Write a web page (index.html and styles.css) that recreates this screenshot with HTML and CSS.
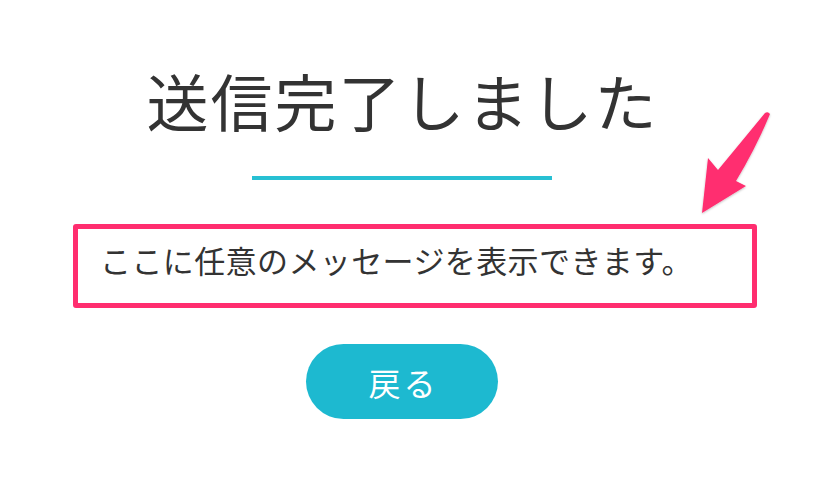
FILE: index.html
```html
<!DOCTYPE html>
<html lang="ja">
<head>
<meta charset="utf-8">
<title>送信完了しました</title>
<link rel="stylesheet" href="styles.css">
</head>
<body>
<main class="page">
  <h1 class="title">送信完了しました</h1>
  <div class="rule"></div>
  <div class="message">ここに任意のメッセージを表示できます。</div>
  <div class="actions">
    <a class="back-btn" href="#">戻る</a>
  </div>
  <svg class="arrow" width="90" height="120" viewBox="0 0 90 120" aria-hidden="true">
    <defs>
      <filter id="sh" x="-20%" y="-20%" width="140%" height="140%">
        <feDropShadow dx="0" dy="1" stdDeviation="1" flood-color="#000" flood-opacity="0.25"/>
      </filter>
    </defs>
    <path filter="url(#sh)" fill="#ff2d6f" d="M75 10 Q78 8 80 11 Q66 45 46 78 L56 83 L12 110 L18 55 L28 67 Q52 38 75 10 Z"/>
  </svg>
</main>
</body>
</html>
```

FILE: styles.css
```css
html, body {
  margin: 0;
  padding: 0;
  background: #ffffff;
}

body {
  font-family: "Noto Sans CJK JP", "Noto Sans", sans-serif;
  color: #333333;
}

.page {
  position: relative;
  width: 834px;
  height: 498px;
  padding-top: 69px;
  box-sizing: border-box;
}

.title {
  margin: 0 0 0 73px;
  width: 684px;
  padding-right: 25px;
  box-sizing: border-box;
  text-align: center;
  font-size: 62px;
  line-height: 62px;
  font-weight: 400;
  letter-spacing: 2px;
  color: #333333;
}

.rule {
  width: 300px;
  height: 4px;
  margin: 45px 0 0 252px;
  background: #27c0d3;
}

.message {
  margin: 44px 0 0 73px;
  width: 684px;
  height: 84px;
  box-sizing: border-box;
  border: 5px solid #ff2d6f;
  border-radius: 3px;
  padding: 15px 22px 0;
  font-size: 31px;
  line-height: 31px;
  letter-spacing: 0.4px;
  color: #333333;
  white-space: nowrap;
}

.actions {
  margin: 36px 0 0 306px;
  width: 192px;
}

.back-btn {
  display: flex;
  align-items: center;
  justify-content: center;
  width: 192px;
  height: 75px;
  border-radius: 38px;
  background: #1db9d0;
  color: #ffffff;
  text-decoration: none;
  font-size: 32px;
  line-height: 1;
  letter-spacing: 3px;
  padding-left: 3px;
  box-sizing: border-box;
}

.arrow {
  position: absolute;
  left: 690px;
  top: 103px;
}
```
